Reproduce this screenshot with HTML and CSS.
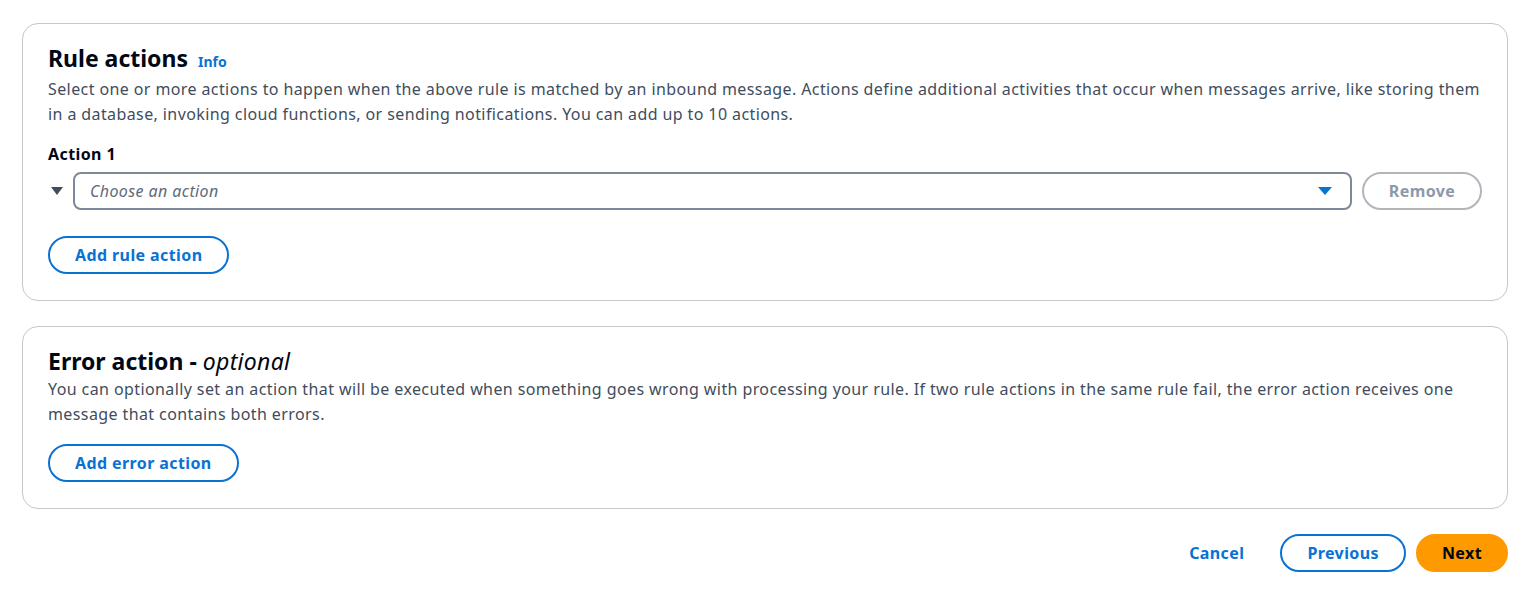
FILE: index.html
```html
<!DOCTYPE html>
<html lang="en">
<head>
  <meta charset="UTF-8" />
  <meta name="viewport" content="width=device-width, initial-scale=1" />
  <title>Rule actions</title>
  <link rel="stylesheet" href="styles.css">
</head>
<body>
  <div class="page">
    <div class="card">
      <h2 class="card-title">Rule actions <a class="info">Info</a></h2>
      <p class="card-desc">Select one or more actions to happen when the above rule is matched by an inbound message. Actions define additional activities that occur when messages arrive, like storing them in a database, invoking cloud functions, or sending notifications. You can add up to 10 actions.</p>

      <div class="field-label">Action 1</div>
      <div class="action-row">
        <span class="caret">
          <svg width="12" height="10" viewBox="0 0 12 10"><path d="M0 1h12L6 9z" fill="#414d5c"/></svg>
        </span>
        <div class="select">
          <span class="placeholder">Choose an action</span>
          <svg width="14" height="10" viewBox="0 0 14 10"><path d="M0 1h14L7 9z" fill="#0972d3"/></svg>
        </div>
        <button class="btn btn-disabled">Remove</button>
      </div>

      <button class="btn btn-normal">Add rule action</button>
    </div>

    <div class="card">
      <h2 class="card-title">Error action - <i class="opt">optional</i></h2>
      <p class="card-desc">You can optionally set an action that will be executed when something goes wrong with processing your rule. If two rule actions in the same rule fail, the error action receives one message that contains both errors.</p>
      <button class="btn btn-normal">Add error action</button>
    </div>

    <div class="footer">
      <a class="link-btn">Cancel</a>
      <button class="btn btn-normal">Previous</button>
      <button class="btn btn-primary">Next</button>
    </div>
  </div>
</body>
</html>
```

FILE: styles.css
```css
body {
  margin: 0;
  font-family: "Noto Sans", "Open Sans", sans-serif;
  color: #000716;
  background: #fff;
  letter-spacing: 0.4px;
}
.page {
  padding: 23px 15px 0 22px;
}
.card {
  border: 1px solid #c6c6cd;
  border-radius: 16px;
  padding: 19px 25px 26px 25px;
  margin-bottom: 25px;
}
.card-title {
  margin: 0;
  font-size: 23px;
  line-height: 31px;
  font-weight: 700;
  display: flex;
  align-items: baseline;
  gap: 10px;
  letter-spacing: 0;
}
.card-title .opt {
  font-weight: 400;
  margin-left: -4px;
  letter-spacing: 0.3px;
}
.info {
  font-size: 14px;
  color: #0972d3;
  font-weight: 700;
}
.card-desc {
  margin: 0 0 17px;
  font-size: 16px;
  line-height: 25px;
  color: #414d5c;
}
.field-label {
  font-size: 16px;
  font-weight: 700;
  line-height: 21px;
  margin-bottom: 7px;
}
.action-row {
  display: flex;
  align-items: center;
  margin-bottom: 26px;
}
.caret {
  width: 25px;
  display: flex;
  align-items: center;
  padding-left: 3px;
  box-sizing: border-box;
}
.select {
  flex: 1;
  height: 38px;
  box-sizing: border-box;
  border: 2px solid #7d8998;
  border-radius: 8px;
  display: flex;
  align-items: center;
  justify-content: space-between;
  padding: 0 18px 0 15px;
  margin-right: 10px;
}
.placeholder {
  font-style: italic;
  color: #5f6b7a;
  font-size: 16px;
}
.btn {
  font-family: inherit;
  letter-spacing: inherit;
  font-size: 16px;
  font-weight: 700;
  height: 38px;
  padding: 0 25px;
  border-radius: 20px;
  background: #fff;
  cursor: pointer;
  box-sizing: border-box;
}
.btn-normal {
  border: 2px solid #0972d3;
  color: #0972d3;
}
.btn-disabled {
  border: 2px solid #b4b4bb;
  color: #8d99a8;
  width: 120px;
  padding: 0;
}
.btn-primary {
  border: 2px solid #ff9900;
  background: #ff9900;
  color: #000716;
  padding: 0 24px;
}
.footer {
  display: flex;
  justify-content: flex-end;
  align-items: center;
  gap: 10px;
}
.link-btn {
  color: #0972d3;
  font-weight: 700;
  font-size: 16px;
  margin-right: 26px;
}
```
